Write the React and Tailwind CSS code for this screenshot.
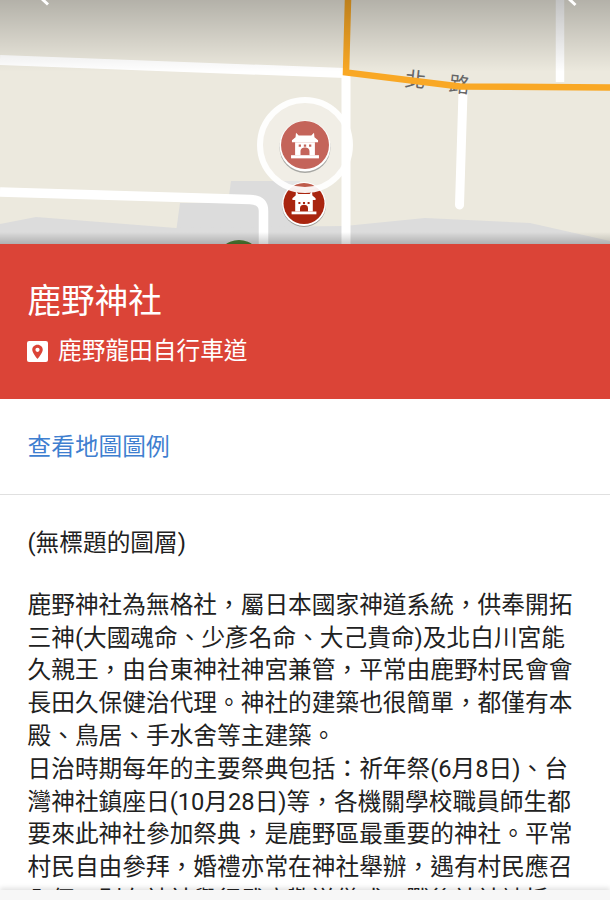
const CJK = "font-['Roboto','Noto_Sans_CJK_TC',sans-serif]";

// little shrine gate used on the map pins
function Gate({ x, y, s = 1 }) {
  return (
    <g transform={`translate(${x} ${y}) scale(${s})`} fill="#fff">
      <path d="M-10 -15 L-7 -12 H7 L10 -15 L10.5 -10 L14.5 -6.5 V-4.5 H-14.5 V-6.5 L-10.5 -10 Z" />
      <path
        fillRule="evenodd"
        d="M-11 -4.5 H11 V10 H-11 Z M-7 -2 V0.5 H-4.5 V-2 Z M-1.3 -2 V0.5 H1.3 V-2 Z M4.5 -2 V0.5 H7 V-2 Z M-5 10 H5 V6 C5 2.5 2.5 1.5 0 1.5 C-2.5 1.5 -5 2.5 -5 6 Z"
      />
      <rect x="-15.5" y="10" width="31" height="3.5" />
    </g>
  );
}

function MapView() {
  return (
    <svg width="610" height="244" viewBox="0 0 610 244" className="block">
      <defs>
        <linearGradient id="topShade" x1="0" y1="0" x2="0" y2="1">
          <stop offset="0" stopColor="#000" stopOpacity="0.24" />
          <stop offset="1" stopColor="#000" stopOpacity="0" />
        </linearGradient>
        <linearGradient id="bottomShade" x1="0" y1="0" x2="0" y2="1">
          <stop offset="0" stopColor="#000" stopOpacity="0" />
          <stop offset="1" stopColor="#000" stopOpacity="0.2" />
        </linearGradient>
      </defs>
      <rect width="610" height="244" fill="#ece9de" />

      {/* grey land */}
      <path d="M231 181 H300 V232 H176 L180 203 H228 Z" fill="#dcdcdc" />
      <path d="M0 224 L36 217 L176 228 L345 226 L425 218 L530 223 L610 241 V244 H0 Z" fill="#dcdcdc" />

      {/* roads */}
      <g fill="none" stroke="#fff">
        <path d="M0 60 L345 73" strokeWidth="10" />
        <path d="M0 192 L250 199.5 Q263.5 200 263.5 211 V244" strokeWidth="9.5" />
        <path d="M346 75 V244" strokeWidth="9" />
        <path d="M560 0 V82" strokeWidth="8.5" />
        <path d="M463 92 L459.5 205" strokeWidth="9" strokeLinecap="round" />
      </g>

      <g fontFamily="'Noto Sans CJK TC', sans-serif" fontSize="21" fill="#666">
        <text x="405" y="87" transform="rotate(6 415 80)">北</text>
        <text x="449" y="92" transform="rotate(6 459 84)">路</text>
      </g>
      <path d="M348 0 L346 72.5 L460 86.5 L610 87.5" fill="none" stroke="#f9a825" strokeWidth="6.5" />

      {/* pins */}
      <circle cx="239" cy="263" r="23" fill="#4e7d33" />
      <circle cx="304" cy="205" r="22" fill="#9a9a96" />
      <circle cx="304" cy="204" r="22" fill="#fff" />
      <circle cx="304" cy="203.5" r="20.5" fill="#a9250f" />
      <Gate x={304} y={203.5} s={0.8} />

      <circle cx="305" cy="145" r="45" fill="#fff" fillOpacity="0.25" stroke="#fff" strokeOpacity="0.92" strokeWidth="6" />

      <circle cx="305" cy="147.5" r="25.5" fill="#a8a8a4" />
      <circle cx="305" cy="146" r="25.5" fill="#fff" />
      <circle cx="305" cy="145" r="24" fill="#c4645a" />
      <Gate x={305} y={146.2} s={0.9} />

      <rect width="610" height="72" fill="url(#topShade)" />
      <rect y="232" width="610" height="12" fill="url(#bottomShade)" />

      {/* chevrons cut off by the top edge */}
      <path d="M42 -1 L48 4.5" stroke="#fff" strokeWidth="3" />
      <path d="M569 -1 L575.5 5" stroke="#fff" strokeWidth="3" />
    </svg>
  );
}

function PlaceIcon() {
  return (
    <svg width="21" height="21" viewBox="0 0 20 20" className="shrink-0 -ml-[0.5px]">
      <rect width="20" height="20" rx="2" fill="#fff" />
      <path
        fillRule="evenodd"
        d="M10 3.5 C7 3.5 5 5.7 5 8.3 C5 11.5 10 17 10 17 C10 17 15 11.5 15 8.3 C15 5.7 13 3.5 10 3.5 Z M10 6.4 A2 2 0 1 1 10 10.4 A2 2 0 1 1 10 6.4 Z"
        fill="#db4437"
      />
    </svg>
  );
}

export default function App() {
  return (
    <div className={`relative h-[900px] w-[610px] overflow-hidden bg-white ${CJK}`}>
      <MapView />

      {/* header */}
      <div className="h-[155px] bg-[#db4437] px-[27.5px] pt-[36px] text-white">
        <h1 className="text-[33.6px] leading-[44px] font-normal">鹿野神社</h1>
        <div className="mt-[9px] flex items-center gap-[10px] text-[23.7px] leading-[36px]">
          <PlaceIcon />
          <span>鹿野龍田自行車道</span>
        </div>
      </div>

      <div className="flex h-[96px] items-center border-b border-[#e0e0e0] px-[27.5px] pt-[2px]">
        <a className="text-[23.7px] text-[#3f7fd0]">查看地圖圖例</a>
      </div>

      <div className="px-[27.5px] pt-[32px] text-[23.7px] leading-[32.8px] text-[#212121]">
        <p>(無標題的圖層)</p>
        <p className="mt-[29px]">
          鹿野神社為無格社，屬日本國家神道系統，供奉開拓三神(大國魂命、少彥名命、大己貴命)及北白川宮能久親王，由台東神社神宮兼管，平常由鹿野村民會會長田久保健治代理。神社的建築也很簡單，都僅有本殿、鳥居、手水舍等主建築。
        </p>
        <p>
          日治時期每年的主要祭典包括：祈年祭(6月8日)、台灣神社鎮座日(10月28日)等，各機關學校職員師生都要來此神社參加祭典，是鹿野區最重要的神社。平常村民自由參拜，婚禮亦常在神社舉辦，遇有村民應召入伍，則在神社舉行武官歡送儀式，戰後神社被拆除。
        </p>
      </div>

      {/* bottom fade over the text */}
      <div className="absolute inset-x-0 bottom-0 h-[10px] bg-[#f7f7f7] shadow-[0_-2px_5px_rgba(0,0,0,0.12)]" />
    </div>
  );
}
